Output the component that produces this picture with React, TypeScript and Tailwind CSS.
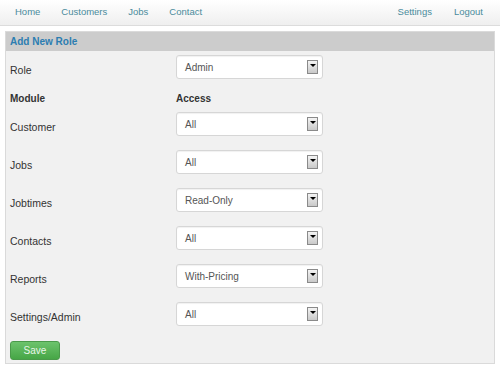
import React from 'react';

const navLeft = ['Home', 'Customers', 'Jobs', 'Contact'];
const navRight = ['Settings', 'Logout'];

const modules = [
  { name: 'Customer', access: 'All' },
  { name: 'Jobs', access: 'All' },
  { name: 'Jobtimes', access: 'Read-Only' },
  { name: 'Contacts', access: 'All' },
  { name: 'Reports', access: 'With-Pricing' },
  { name: 'Settings/Admin', access: 'All' },
];

const FakeSelect: React.FC<{ value: string }> = ({ value }) => (
  <div className="flex h-[24px] w-[147px] items-center justify-between rounded-[3px] border border-[#d6d6d6] bg-white pl-[8px] pr-[4px] shadow-[inset_0_1px_1px_rgba(0,0,0,0.06)]">
    <span className="text-[10px] text-[#555]">{value}</span>
    {/* old-style dropdown arrow box */}
    <span className="flex h-[14px] w-[11px] items-start justify-center border border-[#8a8a8a] bg-gradient-to-b from-[#f4f4f4] to-[#c9c9c9] pt-[3px]">
      <span className="h-0 w-0 border-x-[3px] border-t-[3px] border-x-transparent border-t-black" />
    </span>
  </div>
);

export default function App() {
  return (
    <div className="h-[369px] w-[500px] overflow-hidden bg-white font-['Liberation_Sans',Arial,sans-serif]">
      {/* Top nav */}
      <div className="flex h-[26px] items-center justify-between border-b border-[#dcdcdc] bg-gradient-to-b from-white to-[#efefef] px-[15px] text-[9.5px] text-[#4a8b9c]">
        <div className="flex gap-[21px]">
          {navLeft.map((n) => (
            <span key={n}>{n}</span>
          ))}
        </div>
        <div className="flex gap-[22px] pr-[2px]">
          {navRight.map((n) => (
            <span key={n}>{n}</span>
          ))}
        </div>
      </div>

      {/* Panel */}
      <div className="mx-[5px] mt-[5px] w-[490px] border border-[#dadada] bg-[#f1f1f1]">
        <div className="flex h-[19px] items-center bg-[#cccccc] px-[4px] text-[10px] font-bold text-[#2b7db1]">
          Add New Role
        </div>

        <div className="px-[4px] pt-[4px] pb-[3px]">
          {/* Role */}
          <div className="grid h-[24px] grid-cols-[166px_auto] items-start">
            <div className="pt-[8px] text-[10.5px] leading-[14px] text-[#333]">Role</div>
            <FakeSelect value="Admin" />
          </div>

          {/* Heading */}
          <div className="grid h-[33px] grid-cols-[166px_auto] pt-[14px] text-[10px] leading-[12px] font-bold text-[#333]">
            <div>Module</div>
            <div>Access</div>
          </div>

          {/* Module rows */}
          <div className="flex flex-col gap-[14px]">
            {modules.map((m) => (
              <div key={m.name} className="grid h-[24px] grid-cols-[166px_auto] items-start">
                <div className="pt-[8px] text-[10.5px] leading-[14px] text-[#333]">{m.name}</div>
                <FakeSelect value={m.access} />
              </div>
            ))}
          </div>

          <button className="mt-[15px] flex h-[19px] w-[50px] items-center justify-center rounded-[3px] border border-[#4a9a4a] bg-gradient-to-b from-[#6cc36c] to-[#46a646] text-[10px] text-[#e8f5e8]">
            Save
          </button>
        </div>
      </div>
    </div>
  );
}
